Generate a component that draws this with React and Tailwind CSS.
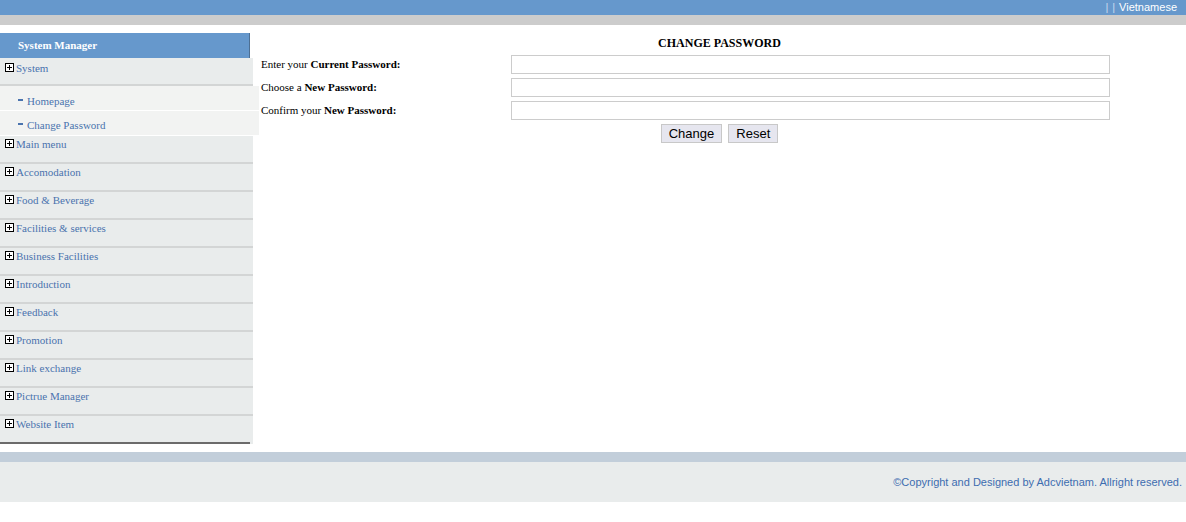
import React from 'react'

const serif = { fontFamily: '"Liberation Serif", "Times New Roman", serif' }
const sans = { fontFamily: '"Liberation Sans", Arial, sans-serif' }

const menus = [
  'Main menu',
  'Accomodation',
  'Food & Beverage',
  'Facilities & services',
  'Business Facilities',
  'Introduction',
  'Feedback',
  'Promotion',
  'Link exchange',
  'Pictrue Manager',
  'Website Item',
]

function PlusBox() {
  return (
    <span className="inline-flex w-[9px] h-[9px] border border-black bg-white items-center justify-center mr-[2px] relative top-[-1px]">
      <svg width="7" height="7" viewBox="0 0 7 7">
        <path d="M3.5 1v5M1 3.5h5" stroke="#000" strokeWidth="1" />
      </svg>
    </span>
  )
}

function MenuItem({ label, last, top = 'pt-[1px]' }) {
  return (
    <div className="w-[253px] h-[28px] bg-[#e9ecec] flex flex-col">
      <div className={`flex-1 pl-[5px] ${top}`}>
        <div className="flex items-center text-[11px] text-[#4a73ae] leading-[14px]">
          <PlusBox />
          {label}
        </div>
      </div>
      <div className={last ? 'h-[2px] w-[250px] bg-[#6b6b6b]' : 'h-[2px] bg-[#d3d5d5]'}></div>
    </div>
  )
}

function SubItem({ label, pad }) {
  return (
    <div className={`w-[259px] h-[25px] bg-[#f2f3f2] border-b border-white flex items-start pl-[18px] ${pad} text-[11px] leading-[14px] text-[#4a73ae]`}>
      <span className="w-[5px] h-[1.5px] bg-[#4a73ae] mr-[4px] mt-[5px]"></span>
      {label}
    </div>
  )
}

export default function App() {
  return (
    <div className="w-[1186px] h-[522px] bg-white" style={serif}>
      <div className="h-[15px] bg-[#6698cc] flex items-center justify-end pr-[9px] text-[11px] text-white" style={sans}>
        <span className="text-[#c9d9ee]">|</span>
        <span className="text-[#c9d9ee] ml-[4px] mr-[4px]">|</span>
        Vietnamese
      </div>
      <div className="h-[10px] bg-[#cccccc]"></div>

      <div className="flex mt-[8px]">
        <div className="w-[259px] shrink-0">
          <div className="w-[250px] h-[25px] bg-[#6698cc] border-r border-[#4d6f93] flex items-center pl-[18px] text-[11px] font-bold text-white">
            System Manager
          </div>
          <MenuItem label="System" top="pt-[3px]" />
          <SubItem label="Homepage" pad="pt-[8px]" />
          <SubItem label="Change Password" pad="pt-[7px]" />
          {menus.map((m, i) => (
            <MenuItem key={m} label={m} last={i === menus.length - 1} />
          ))}
        </div>

        <div className="flex-1 pt-[1px]">
          <div className="text-center text-[12px] font-bold text-black pr-[6px] h-[18px] leading-[18px]">CHANGE PASSWORD</div>
          <div className="flex flex-col gap-[4px] pl-[2px] mt-[3px]">
            {[
              ['Enter your ', 'Current Password:'],
              ['Choose a ', 'New Password:'],
              ['Confirm your ', 'New Password:'],
            ].map(([a, b], i) => (
              <div key={i} className="flex items-start h-[19px]">
                <div className="w-[250px] text-[11px] text-black leading-[18px]">
                  {a}
                  <b>{b}</b>
                </div>
                <input type="password" className="w-[599px] h-[19px] border border-[#cccccc] bg-white outline-none" />
              </div>
            ))}
          </div>
          <div className="flex justify-center gap-[6px] mt-[4px] pr-[6px]" style={sans}>
            <button className="h-[19px] px-[7px] text-[13px] leading-[17px] bg-[#e6e6ef] border border-[#c8c8c8] text-black">Change</button>
            <button className="h-[19px] px-[7px] text-[13px] leading-[17px] bg-[#e6e6ef] border border-[#c8c8c8] text-black">Reset</button>
          </div>
        </div>
      </div>

      <div className="h-[10px] bg-[#c2ceda] mt-[8px]"></div>
      <div className="h-[40px] bg-[#e9ecec] flex items-center justify-end pr-[4px] text-[11px] text-[#3d6db0]" style={sans}>
        ©Copyright and Designed by Adcvietnam. Allright reserved.
      </div>
    </div>
  )
}
